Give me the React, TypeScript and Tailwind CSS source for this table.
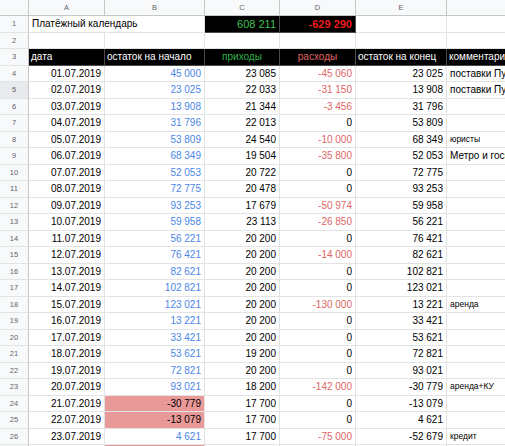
type Row = {
  n: number;
  date: string;
  start: string;
  inc: string;
  out: string;
  end: string;
  note?: string;
  small?: boolean;
  pink?: boolean;
};

const rows: Row[] = [
  { n: 4, date: '01.07.2019', start: '45 000', inc: '23 085', out: '-45 060', end: '23 025', note: 'поставки Пу' },
  { n: 5, date: '02.07.2019', start: '23 025', inc: '22 033', out: '-31 150', end: '13 908', note: 'поставки Пу' },
  { n: 6, date: '03.07.2019', start: '13 908', inc: '21 344', out: '-3 456', end: '31 796' },
  { n: 7, date: '04.07.2019', start: '31 796', inc: '22 013', out: '0', end: '53 809' },
  { n: 8, date: '05.07.2019', start: '53 809', inc: '24 540', out: '-10 000', end: '68 349', note: 'юристы', small: true },
  { n: 9, date: '06.07.2019', start: '68 349', inc: '19 504', out: '-35 800', end: '52 053', note: 'Метро и госп' },
  { n: 10, date: '07.07.2019', start: '52 053', inc: '20 722', out: '0', end: '72 775' },
  { n: 11, date: '08.07.2019', start: '72 775', inc: '20 478', out: '0', end: '93 253' },
  { n: 12, date: '09.07.2019', start: '93 253', inc: '17 679', out: '-50 974', end: '59 958' },
  { n: 13, date: '10.07.2019', start: '59 958', inc: '23 113', out: '-26 850', end: '56 221' },
  { n: 14, date: '11.07.2019', start: '56 221', inc: '20 200', out: '0', end: '76 421' },
  { n: 15, date: '12.07.2019', start: '76 421', inc: '20 200', out: '-14 000', end: '82 621' },
  { n: 16, date: '13.07.2019', start: '82 621', inc: '20 200', out: '0', end: '102 821' },
  { n: 17, date: '14.07.2019', start: '102 821', inc: '20 200', out: '0', end: '123 021' },
  { n: 18, date: '15.07.2019', start: '123 021', inc: '20 200', out: '-130 000', end: '13 221', note: 'аренда', small: true },
  { n: 19, date: '16.07.2019', start: '13 221', inc: '20 200', out: '0', end: '33 421' },
  { n: 20, date: '17.07.2019', start: '33 421', inc: '20 200', out: '0', end: '53 621' },
  { n: 21, date: '18.07.2019', start: '53 621', inc: '19 200', out: '0', end: '72 821' },
  { n: 22, date: '19.07.2019', start: '72 821', inc: '20 200', out: '0', end: '93 021' },
  { n: 23, date: '20.07.2019', start: '93 021', inc: '18 200', out: '-142 000', end: '-30 779', note: 'аренда+КУ', small: true },
  { n: 24, date: '21.07.2019', start: '-30 779', inc: '17 700', out: '0', end: '-13 079', pink: true },
  { n: 25, date: '22.07.2019', start: '-13 079', inc: '17 700', out: '0', end: '4 621', pink: true },
  { n: 26, date: '23.07.2019', start: '4 621', inc: '17 700', out: '-75 000', end: '-52 679', note: 'кредит', small: true },
];

const grid = 'box-border border-r border-b border-[#e2e3e3] flex items-center whitespace-nowrap overflow-hidden';
const num = grid + ' justify-end pr-[3px]';
const colHead =
  'box-border border-r border-b border-[#c4c7c5] bg-[#f8f9fa] text-[#5f6368] text-[7.5px] flex items-center justify-center';
const rowHead =
  'box-border border-r border-r-[#c4c7c5] border-b border-b-[#e2e3e3] bg-[#f8f9fa] text-[#5f6368] text-[7.5px] flex items-center justify-center';
const dark = 'box-border border-r border-b border-[#4a4a4a] bg-black flex items-center whitespace-nowrap overflow-hidden';

export default function App() {
  return (
    <div className="w-[505px] h-[446px] overflow-hidden bg-white text-[10px] text-black font-['Liberation_Sans',Arial,sans-serif]">
      <div className="grid w-max grid-cols-[29px_76px_100px_75px_76px_91px_120px] grid-rows-[16px] auto-rows-[16.5px]">
        {/* column letters */}
        <div className={colHead}></div>
        <div className={colHead}>A</div>
        <div className={colHead}>B</div>
        <div className={colHead}>C</div>
        <div className={colHead}>D</div>
        <div className={colHead}>E</div>
        <div className={colHead}></div>

        {/* row 1 */}
        <div className={rowHead}>1</div>
        <div className={grid + ' col-span-2 pl-[3px]'}>Платёжный календарь</div>
        <div className={dark + ' justify-end pr-[3px] text-[#3cc14e] text-[11px]'}>608 211</div>
        <div className={dark + ' justify-end pr-[3px] text-[#ee1c1c] text-[11px] font-bold'}>-629 290</div>
        <div className={grid}></div>
        <div className={grid}></div>

        {/* row 2 */}
        <div className={rowHead}>2</div>
        <div className={grid}></div>
        <div className={grid}></div>
        <div className={grid}></div>
        <div className={grid}></div>
        <div className={grid}></div>
        <div className={grid}></div>

        {/* row 3 — headers */}
        <div className={rowHead}>3</div>
        <div className={dark + ' pl-[2px] text-white'}>дата</div>
        <div className={dark + ' pl-[2px] text-white'}>остаток на начало</div>
        <div className={dark + ' justify-center text-[#34b04a]'}>приходы</div>
        <div className={dark + ' justify-center text-[#e06666]'}>расходы</div>
        <div className={dark + ' pl-[2px] text-white'}>остаток на конец</div>
        <div className={dark + ' pl-[2px] text-white'}>комментарий</div>

        {rows.map((r) => (
          <div key={r.n} className="contents">
            <div className={r.n === 5 ? rowHead + ' !bg-[#e8eaed]' : rowHead}>{r.n}</div>
            <div className={num}>{r.date}</div>
            <div className={r.pink ? num + ' bg-[#ea9999] text-black' : num + ' text-[#4a86e8]'}>{r.start}</div>
            <div className={num}>{r.inc}</div>
            <div className={r.out.startsWith('-') ? num + ' text-[#e06666]' : num}>{r.out}</div>
            <div className={num}>{r.end}</div>
            <div className={r.small ? grid + ' pl-[3px] text-[8.5px]' : grid + ' pl-[3px]'}>{r.note}</div>
          </div>
        ))}

        {/* row 27, only its top edge is in view */}
        <div className={rowHead}></div>
        <div className={grid}></div>
        <div className={grid + ' bg-[#ea9999]'}></div>
        <div className={grid}></div>
        <div className={grid}></div>
        <div className={grid}></div>
        <div className={grid}></div>
      </div>
    </div>
  );
}
